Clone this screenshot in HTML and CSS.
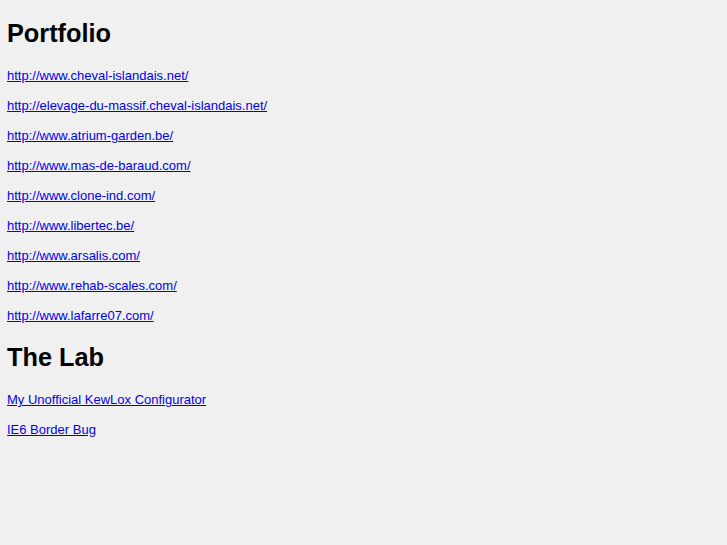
FILE: index.html
```html
<!DOCTYPE html>
<html>
<head>
<meta charset="utf-8">
<title>Portfolio</title>
<link rel="stylesheet" href="styles.css">
</head>
<body>
<section class="block">
<h1 class="title">Portfolio</h1>
<ul class="links">
<li><a href="#">http://www.cheval-islandais.net/</a></li>
<li><a href="#">http://elevage-du-massif.cheval-islandais.net/</a></li>
<li><a href="#">http://www.atrium-garden.be/</a></li>
<li><a href="#">http://www.mas-de-baraud.com/</a></li>
<li><a href="#">http://www.clone-ind.com/</a></li>
<li><a href="#">http://www.libertec.be/</a></li>
<li><a href="#">http://www.arsalis.com/</a></li>
<li><a href="#">http://www.rehab-scales.com/</a></li>
<li><a href="#">http://www.lafarre07.com/</a></li>
</ul>
</section>
<section class="block">
<h1 class="title">The Lab</h1>
<ul class="links">
<li><a href="#">My Unofficial KewLox Configurator</a></li>
<li><a href="#">IE6 Border Bug</a></li>
</ul>
</section>
</body>
</html>
```

FILE: styles.css
```css
html, body {
  background: #f0f0f0;
}
body {
  margin: 0;
  padding: 19px 7px;
  font-family: "Liberation Sans", Arial, sans-serif;
  color: #000;
}
.block + .block {
  margin-top: 12px;
}
.title {
  margin: 0 0 13px;
  font-size: 25.3px;
  line-height: 29px;
  font-weight: bold;
}
.links {
  list-style: none;
  margin: 0;
  padding: 0;
}
.links li {
  font-size: 13px;
  line-height: 30px;
}
.links a {
  color: #0000ee;
  text-decoration: underline;
}
```
